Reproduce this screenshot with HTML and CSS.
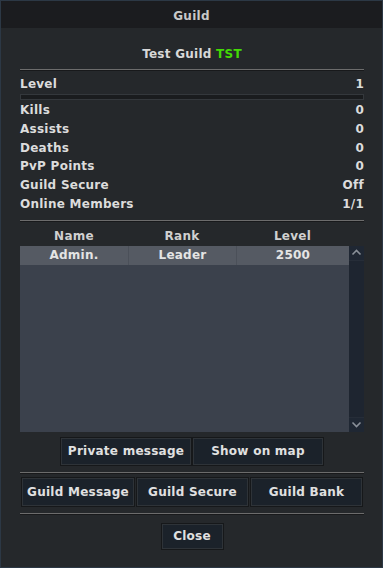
FILE: index.html
```html
<!DOCTYPE html>
<html>
<head>
<meta charset="utf-8">
<link rel="stylesheet" href="styles.css">
</head>
<body>
<div class="window">
  <div class="titlebar">Guild</div>
  <div class="body">
    <div class="guildname">Test Guild <span class="tag">TST</span></div>
    <div class="sep sep1"></div>
    <div class="row level"><span>Level</span><span>1</span></div>
    <div class="bar"></div>
    <div class="stats">
      <div class="row"><span>Kills</span><span>0</span></div>
      <div class="row"><span>Assists</span><span>0</span></div>
      <div class="row"><span>Deaths</span><span>0</span></div>
      <div class="row"><span>PvP Points</span><span>0</span></div>
      <div class="row"><span>Guild Secure</span><span>Off</span></div>
      <div class="row"><span>Online Members</span><span>1/1</span></div>
    </div>
    <div class="sep sep2"></div>
    <div class="thead">
      <span class="c1">Name</span><span class="c2">Rank</span><span class="c3">Level</span>
      <span class="sbspace"></span>
    </div>
    <div class="listwrap">
      <div class="list">
        <div class="trow selected">
          <span class="c1">Admin.</span><span class="c2">Leader</span><span class="c3">2500</span>
        </div>
      </div>
      <div class="scrollbar">
        <div class="arrow">
          <svg width="11" height="7" viewBox="0 0 11 7"><path d="M1.5 5.5 L5.5 1.5 L9.5 5.5" fill="none" stroke="#8a9099" stroke-width="1.6"/></svg>
        </div>
        <div class="track"></div>
        <div class="arrow">
          <svg width="11" height="7" viewBox="0 0 11 7"><path d="M1.5 1.5 L5.5 5.5 L9.5 1.5" fill="none" stroke="#8a9099" stroke-width="1.6"/></svg>
        </div>
      </div>
    </div>
    <div class="btnrow first">
      <div class="btn w130">Private message</div>
      <div class="btn w130">Show on map</div>
    </div>
    <div class="sep sep3"></div>
    <div class="btnrow second">
      <div class="btn g1">Guild Message</div>
      <div class="btn g2">Guild Secure</div>
      <div class="btn g3">Guild Bank</div>
    </div>
    <div class="sep sep4"></div>
    <div class="btnrow third">
      <div class="btn close">Close</div>
    </div>
  </div>
</div>
</body>
</html>
```
FILE: styles.css
```css
html, body {
  margin: 0;
  padding: 0;
  background: #1e2124;
}
.window {
  width: 383px;
  height: 568px;
  box-sizing: border-box;
  border: 1px solid #2c3845;
  background: #25282b;
  font-family: "DejaVu Sans", Verdana, sans-serif;
  font-weight: bold;
  font-size: 12px;
  letter-spacing: 0.25px;
  color: #dcdcdc;
  overflow: hidden;
}
.titlebar {
  height: 27px;
  line-height: 30px;
  text-align: center;
  background: #1b1c1f;
  color: #c8c8c8;
}
.body {
  padding: 18px 18px 0 19px;
}
.guildname {
  text-align: center;
  line-height: 16px;
  height: 16px;
  color: #d8d8d8;
}
.tag {
  color: #43da05;
}
.sep {
  height: 1px;
  background: #6c6c6c;
  border-bottom: 1px solid #18191b;
}
.sep1 {
  margin-top: 7px;
}
.row {
  display: flex;
  justify-content: space-between;
  line-height: 18.8px;
  height: 18.8px;
}
.row.level {
  margin-top: 5px;
  line-height: 16px;
  height: 16px;
}
.bar {
  margin-top: 2px;
  height: 4px;
  background: #1a1c1e;
  border: 1px solid #34383c;
}
.stats {
  margin-top: 1px;
}
.sep2 {
  margin-top: 6px;
}
.thead {
  margin-top: 6px;
  display: flex;
  line-height: 16px;
  height: 16px;
  color: #d0d0d0;
}
.c1, .c2 {
  flex: 0 0 108px;
  box-sizing: border-box;
  text-align: center;
}
.c3 {
  flex: 1;
  box-sizing: border-box;
  text-align: center;
}
.thead .sbspace {
  flex: 0 0 15px;
}
.listwrap {
  margin-top: 2px;
  display: flex;
  height: 186px;
}
.list {
  flex: 1;
  background: #3b414c;
}
.trow {
  display: flex;
  height: 19px;
  line-height: 19px;
}
.trow span {
  color: #e4e4e4;
}
.trow span + span {
  border-left: 1px solid #4b5059;
}
.trow.selected {
  background: #555a63;
}
.scrollbar {
  width: 15px;
  display: flex;
  flex-direction: column;
  background: #1e2530;
}
.arrow {
  height: 14px;
  display: flex;
  align-items: center;
  justify-content: center;
  background: #1f2733;
}
.track {
  flex: 1;
  border-top: 1px solid #262d38;
  border-bottom: 1px solid #262d38;
  background: #1e2530;
}
.btnrow {
  display: flex;
  justify-content: center;
  gap: 2px;
}
.btnrow.first {
  margin-top: 6px;
}
.btn {
  box-sizing: border-box;
  background: #1b222a;
  border: 1px solid #2e3338;
  box-shadow: 0 0 0 1px #16181a;
  color: #e0e0e0;
  text-align: center;
}
.w130 {
  width: 130px;
  height: 27px;
  line-height: 25px;
}
.sep3 {
  margin-top: 7px;
}
.btnrow.second {
  margin-top: 4px;
  gap: 3px;
}
.g1, .g2, .g3 {
  height: 28px;
  line-height: 26px;
}
.g1 { width: 112px; }
.g2 { width: 111px; }
.g3 { width: 111px; }
.sep4 {
  margin-top: 7px;
}
.btnrow.third {
  margin-top: 9px;
}
.close {
  width: 61px;
  height: 25px;
  line-height: 23px;
}
```
